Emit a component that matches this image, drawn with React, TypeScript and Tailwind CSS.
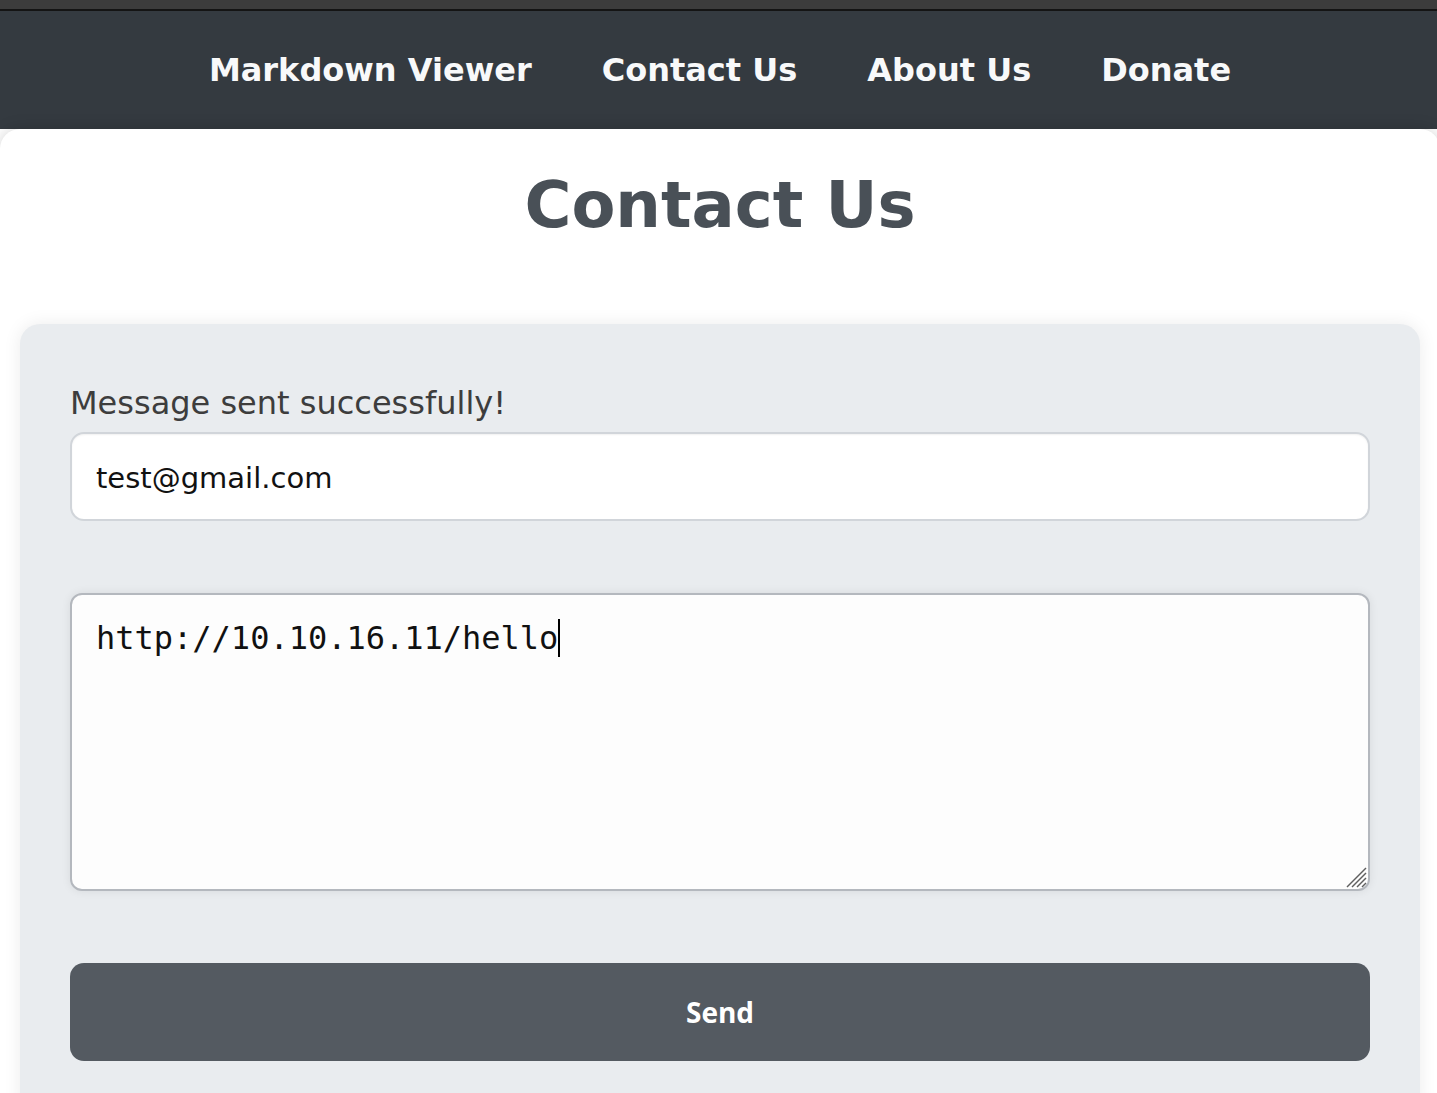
import React from 'react';

const NAV_ITEMS = ['Markdown Viewer', 'Contact Us', 'About Us', 'Donate'];

const App = () => {
  return (
    <div className="min-h-screen w-[1440px] bg-white font-['DejaVu_Sans',sans-serif] overflow-hidden">
      {/* browser strip */}
      <div className="h-[11px] bg-[#3c3c3c] border-b-2 border-[#141414]" />

      {/* nav */}
      <nav className="h-[118px] bg-[#343a40] flex justify-center items-center gap-[70px]">
        {NAV_ITEMS.map((item) => (
          <a key={item} href="#" className="text-[32px] font-bold text-[#f8f9fa] leading-none">
            {item}
          </a>
        ))}
      </nav>

      {/* main container */}
      <main className="bg-white rounded-t-[20px] shadow-[0_0_16px_rgba(0,0,0,0.18)] pt-[38px] pb-[40px]">
        <h1 className="text-center text-[64px] leading-[77px] font-bold text-[#495057]">Contact Us</h1>

        <div className="mx-[20px] mt-[80px] bg-[#e9ecef] rounded-[20px] px-[50px] pt-[60px] pb-[60px] shadow-[0_0_18px_rgba(0,0,0,0.08)]">
          <p className="text-[32px] leading-[38px] text-[#3d3d3d]">Message sent successfully!</p>

          <div className="mt-[10px] h-[89px] bg-white border-2 border-[#d1d5da] rounded-[14px] px-[24px] pt-[5px] flex items-center shadow-[inset_0_1px_2px_rgba(0,0,0,0.06)]">
            <span className="text-[29px] text-[#111]">test@gmail.com</span>
          </div>

          {/* textarea look-alike */}
          <div className="relative mt-[72px] h-[298px] bg-[#fdfdfd] border-2 border-[#b4b8be] rounded-[12px] p-[24px] shadow-[0_0_10px_rgba(0,0,0,0.08)]">
            <div className="font-['DejaVu_Sans_Mono',monospace] text-[32px] leading-[38px] text-[#111] whitespace-pre">
              http://10.10.16.11/hello<span className="inline-block w-[2px] h-[38px] bg-black align-top" />
            </div>
            <svg className="absolute right-[1px] bottom-[1px]" width="22" height="22" viewBox="0 0 22 22">
              <line x1="2" y1="21" x2="21" y2="2" stroke="#5f5f5f" strokeWidth="1.4" />
              <line x1="7" y1="21" x2="21" y2="7" stroke="#5f5f5f" strokeWidth="1.4" />
              <line x1="12" y1="21" x2="21" y2="12" stroke="#5f5f5f" strokeWidth="1.4" />
              <line x1="17" y1="21" x2="21" y2="17" stroke="#5f5f5f" strokeWidth="1.4" />
            </svg>
          </div>

          <button className="mt-[72px] w-full h-[98px] bg-[#545a61] rounded-[14px] text-white text-[28px] font-bold font-['Open_Sans',sans-serif]">
            Send
          </button>
        </div>
      </main>
    </div>
  );
};

export default App;
